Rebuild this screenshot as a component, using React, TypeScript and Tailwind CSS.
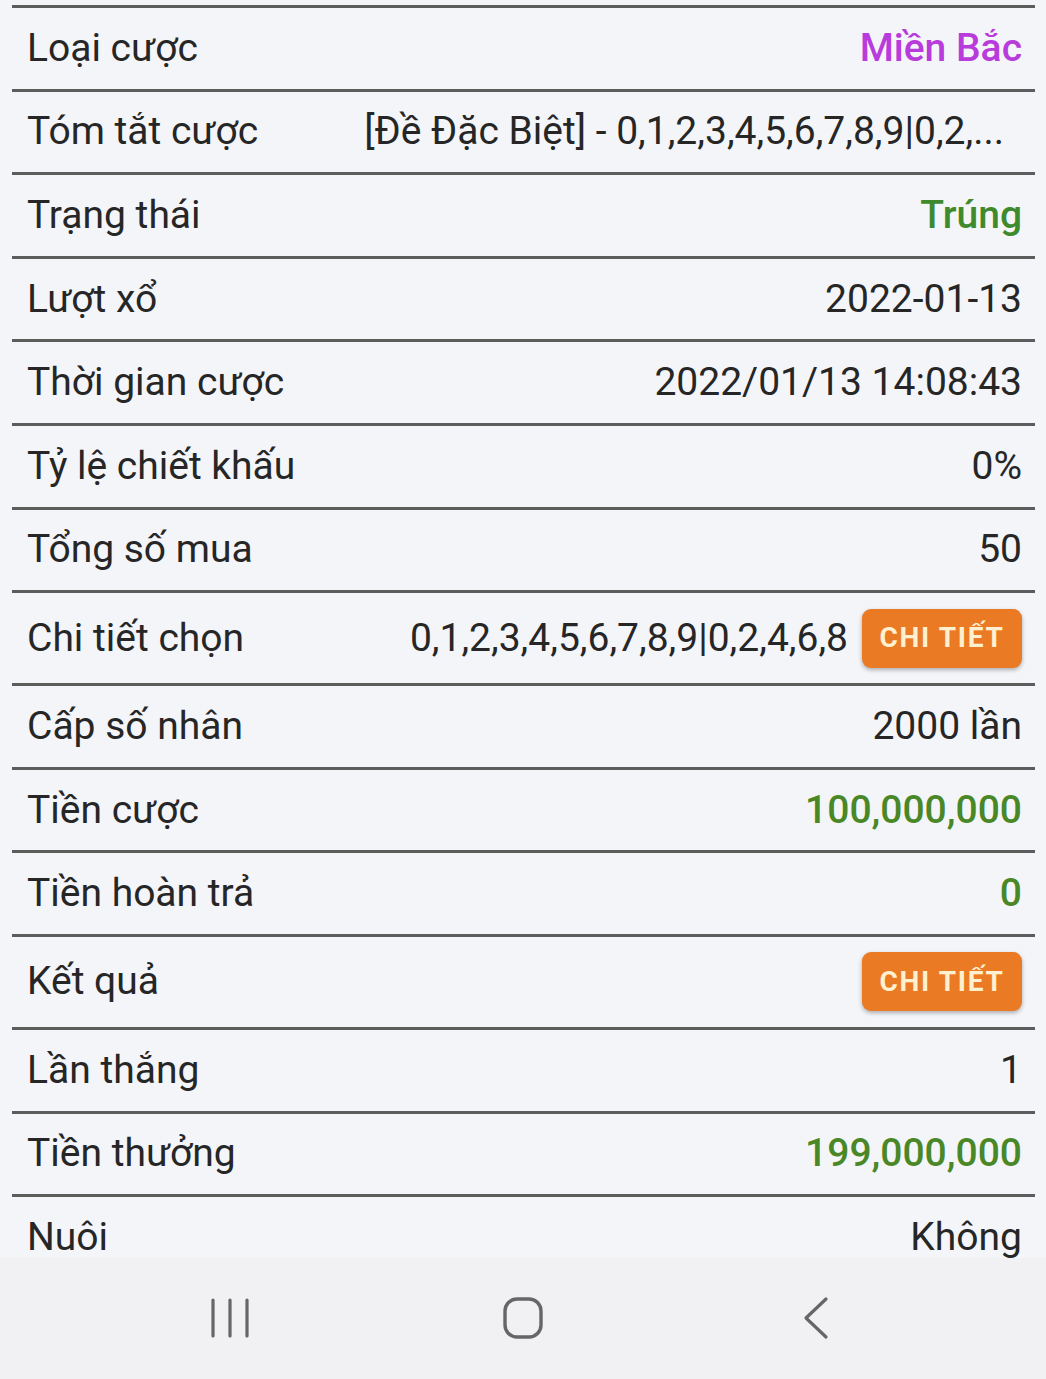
import React from 'react';

type Row = {
  label: string;
  value?: string;
  tone?: 'purple' | 'green' | 'greenBold' | 'plain';
  button?: boolean;
  tall?: boolean;
  extraClass?: string;
};

const rows: Row[] = [
  { label: 'Loại cược', value: 'Miền Bắc', tone: 'purple' },
  { label: 'Tóm tắt cược', value: '[Đề Đặc Biệt] - 0,1,2,3,4,5,6,7,8,9|0,2,...', extraClass: 'mr-[18px]' },
  { label: 'Trạng thái', value: 'Trúng', tone: 'green' },
  { label: 'Lượt xổ', value: '2022-01-13' },
  { label: 'Thời gian cược', value: '2022/01/13 14:08:43' },
  { label: 'Tỷ lệ chiết khấu', value: '0%' },
  { label: 'Tổng số mua', value: '50' },
  { label: 'Chi tiết chọn', value: '0,1,2,3,4,5,6,7,8,9|0,2,4,6,8', button: true, tall: true },
  { label: 'Cấp số nhân', value: '2000 lần' },
  { label: 'Tiền cược', value: '100,000,000', tone: 'greenBold' },
  { label: 'Tiền hoàn trả', value: '0', tone: 'greenBold' },
  { label: 'Kết quả', button: true, tall: true },
  { label: 'Lần thắng', value: '1' },
  { label: 'Tiền thưởng', value: '199,000,000', tone: 'greenBold' },
  { label: 'Nuôi', value: 'Không' },
];

const toneClass: Record<string, string> = {
  purple: 'text-[#b83cdc] font-medium',
  green: 'text-[#3f8a2c] font-medium',
  greenBold: 'text-[#4a8726] font-medium',
  plain: 'text-[#262626]',
};

function DetailButton() {
  return (
    <button className="h-[59px] w-[160px] shrink-0 rounded-[9px] bg-[#eb7a25] text-[28px] font-bold tracking-[0.06em] text-[#fff0cf] shadow-[0_2px_4px_rgba(0,0,0,0.3)]">
      CHI TIẾT
    </button>
  );
}

function InfoRow({ row }: { row: Row }) {
  return (
    <div
      className={`flex items-center justify-between border-t-[3px] border-[#5c5c5c] pl-[15px] pr-[13px] ${
        row.tall ? 'h-[93px]' : 'h-[83.6px]'
      }`}
    >
      <span className="whitespace-nowrap text-[#262626]">{row.label}</span>
      <div className="flex items-center gap-[14px]">
        {row.value && (
          <span className={`whitespace-nowrap ${toneClass[row.tone ?? 'plain']} ${row.extraClass ?? ''}`}>
            {row.value}
          </span>
        )}
        {row.button && <DetailButton />}
      </div>
    </div>
  );
}

function NavBar() {
  return (
    <div className="flex h-[121px] shrink-0 items-center justify-center bg-[#f1f1f3] pb-[2px]">
      <div className="flex w-[293px] justify-center">
        <svg width="40" height="42" viewBox="0 0 40 42">
          <g stroke="#666" strokeWidth="3.2" strokeLinecap="round">
            <line x1="3" y1="3" x2="3" y2="39" />
            <line x1="20" y1="3" x2="20" y2="39" />
            <line x1="37" y1="3" x2="37" y2="39" />
          </g>
        </svg>
      </div>
      <div className="flex w-[293px] justify-center">
        <svg width="42" height="44" viewBox="0 0 42 44">
          <rect x="3" y="3" width="36" height="38" rx="12" fill="none" stroke="#666" strokeWidth="3.4" />
        </svg>
      </div>
      <div className="flex w-[293px] justify-center">
        <svg width="28" height="44" viewBox="0 0 28 44">
          <polyline points="24,3 4,22 24,41" fill="none" stroke="#666" strokeWidth="3.2" strokeLinecap="round" strokeLinejoin="round" />
        </svg>
      </div>
    </div>
  );
}

export default function App() {
  return (
    <div className="flex h-[1379px] w-[1046px] flex-col overflow-hidden bg-[#f4f5f9] font-['Roboto',sans-serif] text-[39px] leading-none">
      <div className="flex-1 overflow-hidden pl-[12px] pr-[11px] pt-[5px]">
        {rows.map((row) => (
          <InfoRow key={row.label} row={row} />
        ))}
      </div>
      <NavBar />
    </div>
  );
}
